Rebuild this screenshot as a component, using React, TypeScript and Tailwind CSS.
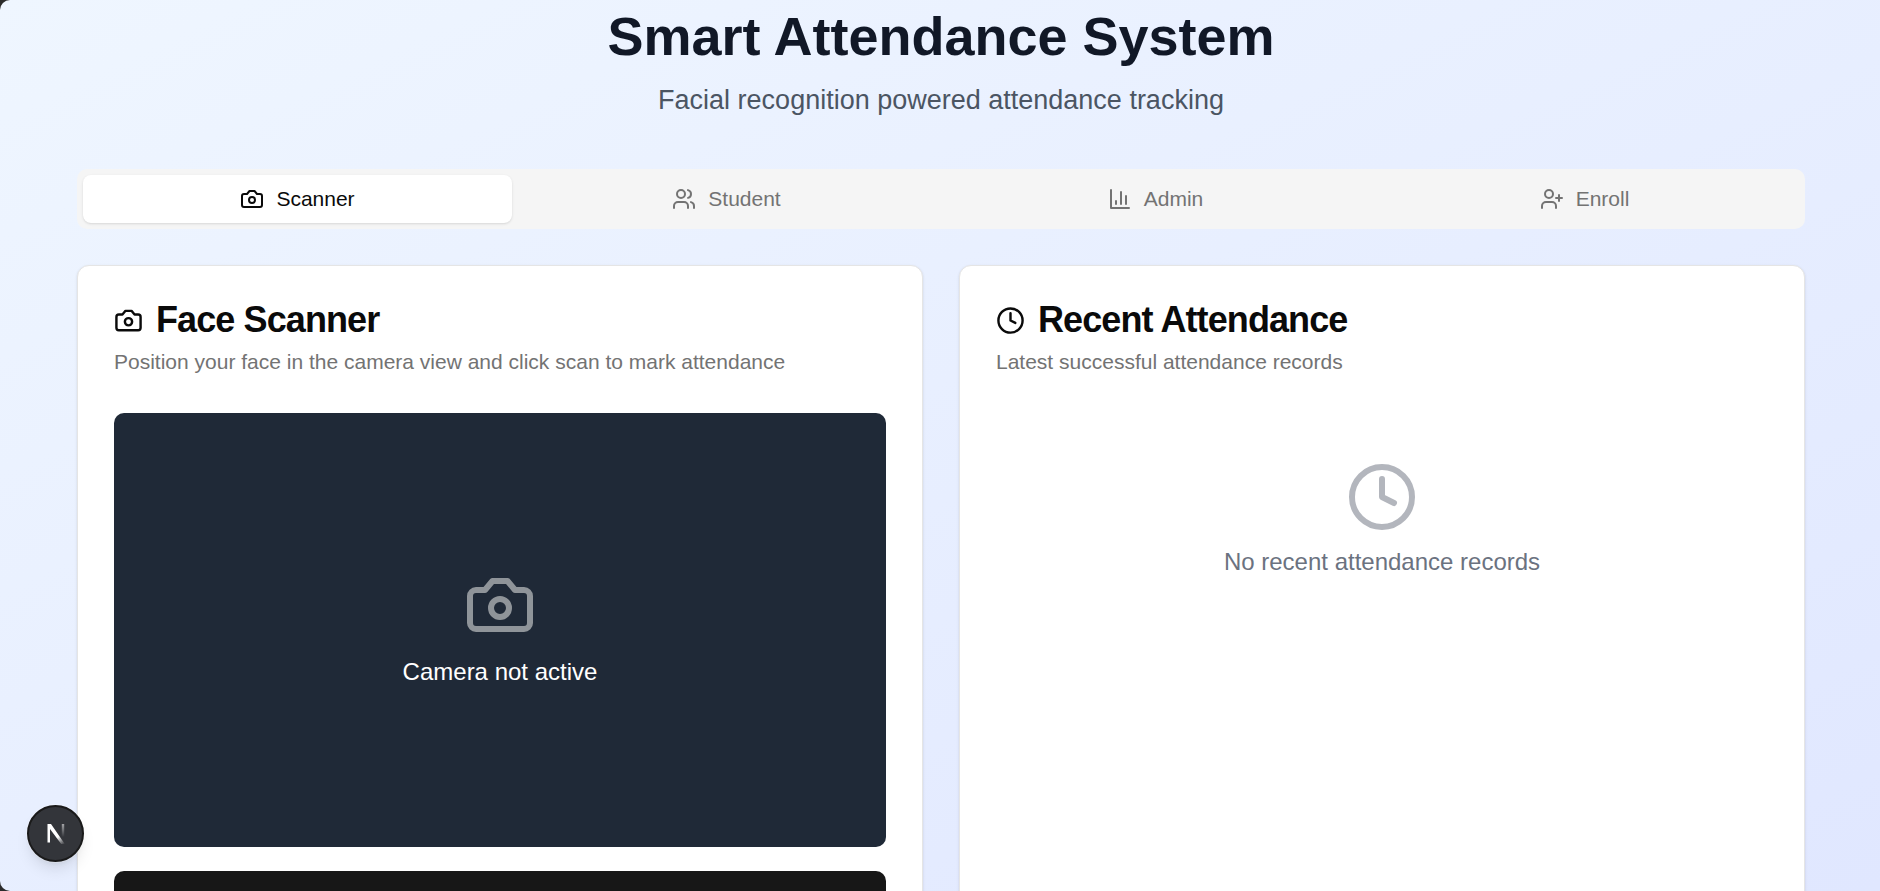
import React from 'react';
import { Users, UserPlus, Clock } from 'lucide-react';

type IconProps = { className?: string };

// older lucide shapes, the installed version rounds these differently
const CameraIcon = ({ className }: IconProps) => (
  <svg viewBox="0 0 24 24" fill="none" stroke="currentColor" strokeWidth="2" strokeLinecap="round" strokeLinejoin="round" className={className}>
    <path d="M14.5 4h-5L7 7H4a2 2 0 0 0-2 2v9a2 2 0 0 0 2 2h16a2 2 0 0 0 2-2V9a2 2 0 0 0-2-2h-3l-2.5-3z" />
    <circle cx="12" cy="13" r="3" />
  </svg>
);

const ChartIcon = ({ className }: IconProps) => (
  <svg viewBox="0 0 24 24" fill="none" stroke="currentColor" strokeWidth="2" strokeLinecap="round" strokeLinejoin="round" className={className}>
    <path d="M3 3v18h18" />
    <path d="M18 17V9" />
    <path d="M13 17V5" />
    <path d="M8 17v-3" />
  </svg>
);

const NextLogo = () => (
  <svg viewBox="0 0 20 24" className="h-[24px] w-[20px]" fill="none">
    <defs>
      <linearGradient id="nDiag" x1="4" y1="3" x2="18" y2="22" gradientUnits="userSpaceOnUse">
        <stop offset="0.6" stopColor="#fff" />
        <stop offset="1" stopColor="#fff" stopOpacity="0.05" />
      </linearGradient>
      <linearGradient id="nStem" x1="17" y1="2" x2="17" y2="15" gradientUnits="userSpaceOnUse">
        <stop stopColor="#fff" stopOpacity="0.55" />
        <stop offset="1" stopColor="#fff" stopOpacity="0" />
      </linearGradient>
    </defs>
    <path d="M1.5 2H5L18.8 22H15.2L4 7V20.5H1.5V2Z" fill="url(#nDiag)" />
    <rect x="15.8" y="2" width="2.4" height="14" fill="url(#nStem)" />
  </svg>
);

const tabs = [
  { label: 'Scanner', icon: CameraIcon, active: true },
  { label: 'Student', icon: Users, active: false },
  { label: 'Admin', icon: ChartIcon, active: false },
  { label: 'Enroll', icon: UserPlus, active: false },
];

export default function App() {
  return (
    <div className="relative h-[891px] overflow-hidden bg-[#2b2b2b] font-['Liberation_Sans',sans-serif]">
      <div className="h-full overflow-hidden rounded-l-[10px] bg-gradient-to-br from-[#eff6ff] to-[#e0e7ff] pr-[75px] pl-[77px]">
        <header className="text-center">
          <h1 className="text-[54px] leading-[72px] font-bold text-[#111827]">Smart Attendance System</h1>
          <p className="mt-[12px] text-[27px] leading-[32px] text-[#4b5563]">Facial recognition powered attendance tracking</p>
        </header>

        <div className="mt-[53px] grid h-[60px] grid-cols-4 rounded-[10px] bg-[#f5f5f5] p-[6px] text-[21px]">
          {tabs.map(({ label, icon: Icon, active }) => (
            <div
              key={label}
              className={
                active
                  ? 'flex items-center justify-center gap-[12px] rounded-[8px] bg-white text-[#0a0a0a] shadow-sm'
                  : 'flex items-center justify-center gap-[12px] text-[#737373]'
              }
            >
              <Icon className="h-[24px] w-[24px]" />
              {label}
            </div>
          ))}
        </div>

        <div className="mt-[36px] grid grid-cols-2 gap-[36px]">
          <section className="h-[700px] rounded-[12px] border border-[#e5e5e5] bg-white px-[36px] pt-[36px] shadow-sm">
            <h2 className="flex items-center gap-[13px] text-[36px] leading-[36px] font-bold tracking-[-0.9px] text-[#0a0a0a]">
              <CameraIcon className="h-[29px] w-[29px]" />
              Face Scanner
            </h2>
            <p className="mt-[10px] text-[21px] leading-[28px] text-[#737373]">
              Position your face in the camera view and click scan to mark attendance
            </p>
            <div className="mt-[37px] flex h-[434px] flex-col items-center justify-center rounded-[10px] bg-[#1f2937] pb-[3px]">
              <CameraIcon className="h-[72px] w-[72px] text-[#8f9499]" />
              <p className="mt-[15px] text-[24px] leading-[32px] text-white">Camera not active</p>
            </div>
            <div className="mt-[24px] h-[60px] rounded-[10px] bg-[#171717]" />
          </section>

          <section className="h-[700px] rounded-[12px] border border-[#e5e5e5] bg-white px-[36px] pt-[36px] shadow-sm">
            <h2 className="flex items-center gap-[13px] text-[36px] leading-[36px] font-bold tracking-[-0.9px] text-[#0a0a0a]">
              <Clock className="h-[29px] w-[29px]" />
              Recent Attendance
            </h2>
            <p className="mt-[10px] text-[21px] leading-[28px] text-[#737373]">Latest successful attendance records</p>
            <div className="mt-[85px] flex flex-col items-center">
              <Clock className="h-[72px] w-[72px] text-[#b3b6bd]" />
              <p className="mt-[13px] text-[24px] leading-[32px] text-[#6b7280]">No recent attendance records</p>
            </div>
          </section>
        </div>
      </div>

      <div className="absolute bottom-[29px] left-[27px] flex h-[57px] w-[57px] items-center justify-center rounded-full border-2 border-[#1a1a1a] bg-[#33353a] shadow-lg ring-1 ring-white/25">
        <NextLogo />
      </div>
    </div>
  );
}
